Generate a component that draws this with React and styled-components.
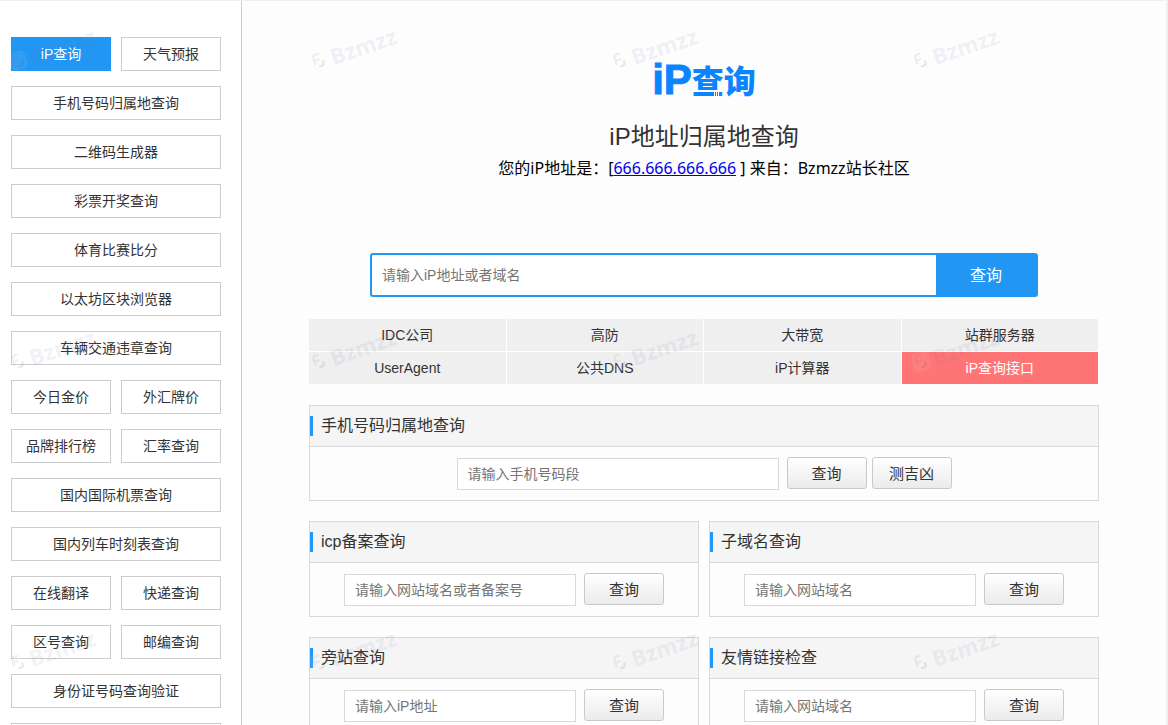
import React from "react";
import styled, { createGlobalStyle } from "styled-components";

const GlobalStyle = createGlobalStyle`
  * {
    box-sizing: border-box;
  }

  html {
    scrollbar-width: none;
  }

  body {
    margin: 0;
    background: #fdfdfd;
    color: #333;
    font-family: "Liberation Sans", "Noto Sans CJK SC", sans-serif;
    font-size: 14px;
  }

  input,
  button {
    font-family: inherit;
  }
`;

const Page = styled.div`
  position: relative;
  display: flex;
  min-height: 100vh;
  overflow: hidden;
  border-top: 1px solid #f0f0f0;
  border-right: 2px solid #f0f0f0;
`;

const Sidebar = styled.nav`
  display: grid;
  grid-template-columns: 1fr 1fr;
  align-content: start;
  gap: 15px 10px;
  flex: 0 0 242px;
  padding: 36px 20px 20px 11px;
  background: #fff;
  border-right: 1px solid #ccc;
`;

const SideLink = styled.a`
  grid-column: ${(props) => (props.$wide ? "span 2" : "auto")};
  height: 34px;
  line-height: 32px;
  text-align: center;
  text-decoration: none;
  white-space: nowrap;
  color: ${(props) => (props.$active ? "#fff" : "#333")};
  background: ${(props) => (props.$active ? "#2196f3" : "#fff")};
  border: 1px solid ${(props) => (props.$active ? "#2196f3" : "#ccc")};
`;

const Main = styled.main`
  flex: 1;
  min-width: 0;
  padding: 58px 20px 20px;
`;

const Content = styled.div`
  display: flex;
  flex-direction: column;
  max-width: 790px;
  margin: 0 auto;
`;

const Logo = styled.div`
  display: flex;
  align-items: center;
  justify-content: center;
  height: 40px;
  color: #0a84ff;
`;

const LogoLatin = styled.span`
  font: 700 42px/42px "Liberation Sans", sans-serif;
  padding-top: 2px;
  -webkit-text-stroke: 1px #0a84ff;
`;

const LogoHan = styled.span`
  position: relative;
  font: 900 32px/40px "Noto Sans CJK SC", sans-serif;

  /* barcode cut at the foot of the first character */
  &::after {
    content: "";
    position: absolute;
    left: 22px;
    bottom: 3px;
    width: 5px;
    height: 4px;
    background: repeating-linear-gradient(90deg, #fdfdfd 0 1px, transparent 1px 2px);
  }
`;

const Title = styled.h1`
  margin: 20px 0 0;
  font: 400 24px/36px "Liberation Sans", "Noto Sans CJK SC", sans-serif;
  text-align: center;
`;

const Address = styled.p`
  margin: 0;
  color: #000;
  font: 400 16px/26px "Noto Sans", "Noto Sans CJK SC", sans-serif;
  text-align: center;

  a {
    color: #0000ee;
  }
`;

const Search = styled.form`
  display: flex;
  width: 100%;
  max-width: 668px;
  height: 44px;
  margin: 72px auto 22px;
`;

const SearchInput = styled.input`
  flex: 1;
  min-width: 0;
  padding: 0 10px;
  font-size: 14px;
  background: #fff;
  border: 2px solid #2196f3;
  border-right: 0;
  border-radius: 3px 0 0 3px;
  outline: none;

  &::placeholder {
    color: #757575;
  }
`;

const SearchButton = styled.button`
  width: 102px;
  padding: 0 2px 2px 0;
  color: #fff;
  font-size: 16px;
  background: #2196f3;
  border: 0;
  border-radius: 0 3px 3px 0;
`;

const QuickLinks = styled.div`
  display: grid;
  grid-template-columns: repeat(4, 1fr);
  gap: 1px;
  margin-right: 1px;
  background: #fff;
`;

const QuickLink = styled.a`
  height: 32px;
  line-height: 32px;
  text-align: center;
  text-decoration: none;
  color: ${(props) => (props.$hot ? "#fff" : "#333")};
  background: ${(props) => (props.$hot ? "#ff7575" : "#efefef")};
`;

const Panels = styled.div`
  display: grid;
  grid-template-columns: 1fr 1fr;
  gap: 20px 10px;
  margin-top: 21px;
`;

const PanelBox = styled.section`
  grid-column: ${(props) => (props.$wide ? "span 2" : "auto")};
  min-width: 0;
  border: 1px solid #d9d9d9;
`;

const PanelTitle = styled.h2`
  display: flex;
  gap: 8px;
  height: 41px;
  margin: 0;
  font-size: 16px;
  font-weight: 400;
  line-height: 40px;
  background: #f5f5f5;
  border-bottom: 1px solid #d9d9d9;

  &::before {
    content: "";
    width: 3px;
    height: 20px;
    margin-top: 10px;
    background: #2196f3;
  }
`;

const PanelForm = styled.form`
  display: flex;
  justify-content: center;
  gap: 5px;
  padding: 10px;
`;

const PanelInput = styled.input`
  width: ${(props) => (props.$wide ? "322px" : "232px")};
  min-width: 0;
  height: 32px;
  margin: 1px 3px 0 0;
  padding: 0 10px;
  font-size: 14px;
  background: #fff;
  border: 1px solid #d9d9d9;
  outline: none;

  &::placeholder {
    color: #757575;
  }
`;

const PanelButton = styled.button`
  width: 80px;
  height: 32px;
  padding: 0 0 2px;
  color: #333;
  font-size: 15px;
  background: linear-gradient(#fff, #ebebeb);
  border: 1px solid #c9c9c9;
  border-radius: 3px;
`;

// floats over the whole page, never takes clicks
const WatermarkLayer = styled.div`
  position: absolute;
  inset: 0;
  display: grid;
  grid-template-columns: repeat(auto-fill, 301px);
  grid-auto-rows: 301px;
  padding: 23px 0 0 7px;
  margin-right: -300px;
  overflow: hidden;
  pointer-events: none;
`;

const Mark = styled.div`
  display: flex;
  align-items: center;
  gap: 3px;
  width: 90px;
  height: 50px;
  transform: rotate(-19deg);
  color: rgba(110, 110, 170, 0.1);
  font: 700 22px/50px "Noto Sans", sans-serif;
`;

const MarkIcon = () => (
  <svg width="20" height="20" viewBox="0 0 20 20" fill="none" aria-hidden="true">
    <rect width="20" height="20" rx="6" fill="rgba(255,255,235,0.08)" />
    <path
      d="M12 2.5H8Q5 2.5 5 6V13M5 8.5H11"
      stroke="rgba(110,110,170,0.12)"
      strokeWidth="2"
    />
    <path d="M14 11V13Q14 16 11 16H8" stroke="rgba(60,60,60,0.11)" strokeWidth="2.5" />
  </svg>
);

const sideLinks = [
  { text: "iP查询", active: true },
  { text: "天气预报" },
  { text: "手机号码归属地查询", wide: true },
  { text: "二维码生成器", wide: true },
  { text: "彩票开奖查询", wide: true },
  { text: "体育比赛比分", wide: true },
  { text: "以太坊区块浏览器", wide: true },
  { text: "车辆交通违章查询", wide: true },
  { text: "今日金价" },
  { text: "外汇牌价" },
  { text: "品牌排行榜" },
  { text: "汇率查询" },
  { text: "国内国际机票查询", wide: true },
  { text: "国内列车时刻表查询", wide: true },
  { text: "在线翻译" },
  { text: "快递查询" },
  { text: "区号查询" },
  { text: "邮编查询" },
  { text: "身份证号码查询验证", wide: true },
  { text: "万年历查询", wide: true },
];

const quickLinks = [
  "IDC公司",
  "高防",
  "大带宽",
  "站群服务器",
  "UserAgent",
  "公共DNS",
  "iP计算器",
  "iP查询接口",
];

const panels = [
  {
    title: "手机号码归属地查询",
    placeholder: "请输入手机号码段",
    buttons: ["查询", "测吉凶"],
    wide: true,
  },
  { title: "icp备案查询", placeholder: "请输入网站域名或者备案号", buttons: ["查询"] },
  { title: "子域名查询", placeholder: "请输入网站域名", buttons: ["查询"] },
  { title: "旁站查询", placeholder: "请输入iP地址", buttons: ["查询"] },
  { title: "友情链接检查", placeholder: "请输入网站域名", buttons: ["查询"] },
];

const Panel = ({ title, placeholder, buttons, wide }) => (
  <PanelBox $wide={wide}>
    <PanelTitle>{title}</PanelTitle>
    <PanelForm onSubmit={(e) => e.preventDefault()}>
      <PanelInput type="text" aria-label={title} placeholder={placeholder} $wide={wide} />
      {buttons.map((text) => (
        <PanelButton key={text}>{text}</PanelButton>
      ))}
    </PanelForm>
  </PanelBox>
);

export default function App() {
  return (
    <>
      <GlobalStyle />
      <Page>
        <Sidebar>
          {sideLinks.map((item) => (
            <SideLink key={item.text} href="#" $wide={item.wide} $active={item.active}>
              {item.text}
            </SideLink>
          ))}
        </Sidebar>
        <Main>
          <Content>
            <Logo>
              <LogoLatin>iP</LogoLatin>
              <LogoHan>查询</LogoHan>
            </Logo>
            <Title>iP地址归属地查询</Title>
            <Address>
              您的iP地址是：[<a href="#">666.666.666.666</a> ] 来自：Bzmzz站长社区
            </Address>
            <Search onSubmit={(e) => e.preventDefault()}>
              <SearchInput
                type="text"
                aria-label="iP地址或者域名"
                placeholder="请输入iP地址或者域名"
              />
              <SearchButton>查询</SearchButton>
            </Search>
            <QuickLinks>
              {quickLinks.map((text) => (
                <QuickLink key={text} href="#" $hot={text === "iP查询接口"}>
                  {text}
                </QuickLink>
              ))}
            </QuickLinks>
            <Panels>
              {panels.map((panel) => (
                <Panel key={panel.title} {...panel} />
              ))}
            </Panels>
          </Content>
        </Main>
        <WatermarkLayer aria-hidden="true">
          {Array.from({ length: 12 }, (_, i) => (
            <Mark key={i}>
              <MarkIcon />
              Bzmzz
            </Mark>
          ))}
        </WatermarkLayer>
      </Page>
    </>
  );
}
